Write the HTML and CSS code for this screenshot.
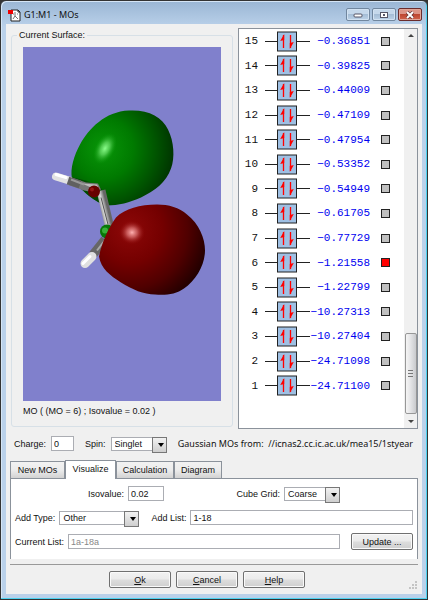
FILE: index.html
```html
<!DOCTYPE html>
<html lang="en">
<head>
    <meta charset="UTF-8">
    <meta name="viewport" content="width=device-width, initial-scale=1.0">
    <title>G1:M1 - MOs</title>
    <link rel="stylesheet" href="styles.css">
</head>
<body>
    <div class="window">
        <!-- title bar -->
        <header class="titlebar">
            <svg class="app-icon" width="13" height="13" viewBox="0 0 13 13" aria-hidden="true">
                <path d="M3 1h7l2 2v9H3z" fill="#fff" stroke="#222"/>
                <path d="M10 1v2h2" fill="none" stroke="#222"/>
                <path d="M7 3v4l-2 3M7 7l3 3M5 5h1M9 5h1" fill="none" stroke="#777"/>
                <rect x="0" y="1" width="5" height="4" fill="#e00"/>
            </svg>
            <h1 class="title">G1:M1 - MOs</h1>
            <div class="win-buttons">
                <button class="win-btn" aria-label="Minimize">
                    <svg width="10" height="8" viewBox="0 0 10 8"><rect x="1" y="3" width="8" height="3" rx="1" fill="#fff" stroke="#556"/></svg>
                </button>
                <button class="win-btn" aria-label="Maximize">
                    <svg width="10" height="8" viewBox="0 0 10 8"><rect x="1.5" y="1.5" width="7" height="5" fill="#fff" stroke="#556"/><rect x="4" y="3" width="2" height="2" fill="#556"/></svg>
                </button>
                <button class="win-btn win-close" aria-label="Close">
                    <svg width="10" height="8" viewBox="0 0 10 8"><path d="M2 1l6 6M8 1L2 7" stroke="#633" stroke-width="3.4"/><path d="M2 1l6 6M8 1L2 7" stroke="#fff" stroke-width="2"/></svg>
                </button>
            </div>
        </header>

        <main class="client">
            <div class="panels">
                <!-- surface viewer -->
                <fieldset class="surface">
                    <legend>Current Surface:</legend>
                    <div class="view">
                        <svg viewBox="23 47 198 353" role="img" aria-label="Molecular orbital 6">
                            <defs>
                                <radialGradient id="green" gradientUnits="userSpaceOnUse" cx="103" cy="148" r="76">
                                    <stop offset="0" stop-color="#089608"/>
                                    <stop offset=".4" stop-color="#007a00"/>
                                    <stop offset=".7" stop-color="#005400"/>
                                    <stop offset="1" stop-color="#002c00"/>
                                </radialGradient>
                                <radialGradient id="red" gradientUnits="userSpaceOnUse" cx="129" cy="229" r="84">
                                    <stop offset="0" stop-color="#8e0808"/>
                                    <stop offset=".4" stop-color="#740000"/>
                                    <stop offset=".7" stop-color="#500000"/>
                                    <stop offset="1" stop-color="#1c0000"/>
                                </radialGradient>
                                <radialGradient id="greenShine">
                                    <stop offset="0" stop-color="#8cff8c"/>
                                    <stop offset=".4" stop-color="#5fd65f" stop-opacity=".8"/>
                                    <stop offset="1" stop-color="#089608" stop-opacity="0"/>
                                </radialGradient>
                                <radialGradient id="redShine">
                                    <stop offset="0" stop-color="#ffb0b0"/>
                                    <stop offset=".4" stop-color="#d46a6a" stop-opacity=".8"/>
                                    <stop offset="1" stop-color="#8e0808" stop-opacity="0"/>
                                </radialGradient>
                                <linearGradient id="bond" gradientUnits="userSpaceOnUse" x1="100" y1="212" x2="108" y2="210">
                                    <stop offset="0" stop-color="#777"/>
                                    <stop offset=".5" stop-color="#ddd"/>
                                    <stop offset="1" stop-color="#666"/>
                                </linearGradient>
                            </defs>
                            <path d="M129 110C148 109 162 116 168 129C174 141 175 157 171 168C166 182 155 190 141 197C130 202 118 205 107 205C96 203 80 189 72 178C70 168 74 155 80 144C89 128 105 111 129 110Z" fill="url(#green)"/>
                            <path d="M72 177C84 179 93 182 101 188C106 193 108 199 109 205C96 203 82 191 72 177Z" fill="#003c00" opacity=".65"/>
                            <ellipse cx="105" cy="148" rx="10" ry="17" transform="rotate(28 105 148)" fill="url(#greenShine)"/>
                            <!-- upper bond -->
                            <path d="M69 176L67 184L84 190L94 192L101 189L98 183L86 182Z" fill="#777"/>
                            <path d="M82 183L97 184L99 188L91 187Z" fill="#bbb"/>
                            <path d="M56 176L69 180" stroke="#e2e2e2" stroke-width="8" stroke-linecap="round"/>
                            <path d="M56 174L66 177" stroke="#fff" stroke-width="3" stroke-linecap="round"/>
                            <path d="M68 180L80 184" stroke="#606060" stroke-width="8"/>
                            <path d="M71 179L84 184" stroke="#999" stroke-width="2"/>
                            <path d="M101 190L110 228" stroke="url(#bond)" stroke-width="9"/>
                            <path d="M101 197L108 224" stroke="#555" stroke-width="1"/>
                            <circle cx="94" cy="191" r="6" fill="#680000"/>
                            <circle cx="92" cy="189" r="2" fill="#931515"/>
                            <!-- lower bond -->
                            <path d="M105 239L93 254" stroke="#666" stroke-width="9"/>
                            <path d="M107 237L97 250" stroke="#aaa" stroke-width="2"/>
                            <circle cx="107" cy="231" r="7" fill="#087808"/>
                            <circle cx="105" cy="230" r="3" fill="#38b038"/>
                            <path d="M92 256L85 263" stroke="#e0e0e0" stroke-width="9" stroke-linecap="round"/>
                            <path d="M90 256L83 263" stroke="#fff" stroke-width="3" stroke-linecap="round"/>
                            <path d="M157 204C169 204 179 207 187 214C199 223 205 238 205 250C205 264 196 280 184 288C176 294 165 295 155 294C144 294 132 289 121 282C110 275 101 268 99 256C102 242 108 228 116 217C125 208 140 204 157 204Z" fill="url(#red)"/>
                            <ellipse cx="132" cy="232" rx="13" ry="12" fill="url(#redShine)"/>
                        </svg>
                    </div>
                    <p class="caption">MO ( (MO = 6) ; Isovalue = 0.02 )</p>
                </fieldset>

                <!-- orbital energies -->
                <section class="orbitals" aria-label="Orbitals">
                    <ol class="levels" id="levels"></ol>
                    <div class="scrollbar" aria-hidden="true">
                        <span class="arrow-up"></span>
                        <span class="track"></span>
                        <span class="thumb"></span>
                        <span class="arrow-down"></span>
                    </div>
                </section>
            </div>

            <div class="info">
                <label for="charge">Charge:</label>
                <input class="field charge" id="charge" type="text" value="0">
                <label for="spin">Spin:</label>
                <span class="select spin"><select id="spin"><option>Singlet</option></select></span>
                <span class="source">Gaussian MOs from:&nbsp; //icnas2.cc.ic.ac.uk/mea15/1styear</span>
            </div>

            <div class="tabs" role="tablist">
                <button class="tab tab-new" role="tab" aria-selected="false">New MOs</button>
                <button class="tab tab-vis active" role="tab" aria-selected="true">Visualize</button>
                <button class="tab tab-calc" role="tab" aria-selected="false">Calculation</button>
                <button class="tab tab-diag" role="tab" aria-selected="false">Diagram</button>
            </div>
            <form class="tab-body" onsubmit="return false">
                <div class="row row-iso">
                    <label for="iso">Isovalue:</label>
                    <input class="field iso" id="iso" type="text" value="0.02">
                    <label class="grid-label" for="cube">Cube Grid:</label>
                    <span class="select cube"><select id="cube"><option>Coarse</option></select></span>
                </div>
                <div class="row">
                    <label for="type">Add Type:</label>
                    <span class="select type"><select id="type"><option>Other</option></select></span>
                    <label class="list-label" for="list">Add List:</label>
                    <input class="field grow" id="list" type="text" value="1-18">
                </div>
                <div class="row">
                    <label for="current">Current List:</label>
                    <input class="field grow" id="current" type="text" value="1a-18a" disabled>
                    <button class="btn update">Update ...</button>
                </div>
            </form>

            <footer class="actions">
                <button class="btn"><u>O</u>k</button>
                <button class="btn"><u>C</u>ancel</button>
                <button class="btn"><u>H</u>elp</button>
                <svg class="grip" width="8" height="8" viewBox="0 0 8 8" aria-hidden="true">
                    <path d="M6 0h2v2H6zM3 3h2v2H3zM6 3h2v2H6zM0 6h2v2H0zM3 6h2v2H3zM6 6h2v2H6z" fill="#c4c4c4"/>
                </svg>
            </footer>
        </main>
    </div>

    <script>
        // energies from orbital 15 down to 1
        const energies = [
            '−0.36851', '−0.39825', '−0.44009', '−0.47109', '−0.47954',
            '−0.53352', '−0.54949', '−0.61705', '−0.77729', '−1.21558',
            '−1.22799', '−10.27313', '−10.27404', '−24.71098', '−24.71100'
        ];
        const selected = 6;
        const levels = document.getElementById('levels');

        energies.forEach((energy, i) => {
            const n = energies.length - i;
            const row = document.createElement('li');
            row.className = 'level';
            row.innerHTML = `
                <label class="num" for="mo${n}">${n}</label>
                <svg class="pair" width="45" height="21" viewBox="0 0 45 21">
                    <path d="M0 10.5h45" stroke="#222"/>
                    <rect x="12.5" y="1" width="19" height="19" fill="#9fc0e4" stroke="#222"/>
                    <path d="M18.5 17V4M25.5 4v13" stroke="#f00" stroke-width="1.3" fill="none"/>
                    <path d="M19.2 3v6l-4 1zM24.8 18v-6l4-1z" fill="#f00"/>
                </svg>
                <span class="energy">${energy}</span>
                <input class="mark" type="checkbox" id="mo${n}" ${n === selected ? 'checked' : ''}>`;
            levels.appendChild(row);
        });
    </script>
</body>
</html>
```

FILE: styles.css
```css
* {
    margin: 0;
    padding: 0;
    box-sizing: border-box;
}
body {
    background: #333;
    font-family: "Liberation Sans", Arial, sans-serif;
    font-size: 9px;
    line-height: 12px;
    color: #111;
}
button, input, select {
    font: inherit;
    color: inherit;
}
.window {
    display: flex;
    flex-direction: column;
    min-height: 100vh;
    padding: 0 5px 5px;
    border: 1px solid #333;
    border-radius: 6px 6px 0 0;
    background: linear-gradient(#9ab6d4, #bad1ea 26px);
    box-shadow: inset -1px -1px #4cd2f0, inset 1px 1px #d5e5f5;
}
/* title bar */
.titlebar {
    display: flex;
    align-items: center;
    gap: 3px;
    height: 23px;
    padding: 5px 0 0 2px;
}
.title {
    flex: 1;
    font-family: "Noto Sans", sans-serif;
    font-size: 9px;
    font-weight: normal;
}
.win-buttons {
    display: flex;
    align-self: flex-start;
    gap: 2px;
    margin-top: 2px;
}
.win-btn {
    display: flex;
    align-items: center;
    justify-content: center;
    width: 24px;
    height: 13px;
    border: 1px solid #71879f;
    border-radius: 2px;
    background: linear-gradient(#c5d8eb 45%, #a5bdd6 50%, #bdd3e8);
    box-shadow: inset 0 0 0 1px #d2e2f2;
}
.win-close {
    border-color: #6a2c2c;
    background: linear-gradient(#dc9486 45%, #be4630 50%, #d0644c);
    box-shadow: inset 0 0 0 1px #e1a598;
}
.client {
    flex: 1;
    display: flex;
    flex-direction: column;
    padding: 4px 4px 5px;
    background: #f0f0f0;
}
/* surface and orbital list */
.panels {
    flex: 1;
    display: flex;
    gap: 5px;
}
.surface {
    flex: 1;
    display: flex;
    flex-direction: column;
    min-width: 0;
    margin: 1px 0 2px 1px;
    padding: 6px 11px 9px;
    border: 1px solid #d7e0e7;
    border-radius: 3px;
}
.surface legend {
    margin-left: -6px;
    padding: 0 2px;
}
.view {
    flex: 1;
    display: flex;
    background: #8080cc;
}
.view svg {
    flex: 1;
    width: 100%;
}
.caption {
    margin-top: 4px;
}
.orbitals {
    display: flex;
    width: 180px;
    border: 1px solid #8b929b;
    background: #fff;
}
.levels {
    flex: 1;
    display: flex;
    flex-direction: column;
    padding-bottom: 30px;
    list-style: none;
}
.level {
    flex: 1;
    display: grid;
    grid-template-columns: 19px 45px 53px 13px;
    column-gap: 7px;
    align-items: center;
    font-family: "Liberation Mono", monospace;
    font-size: 11px;
}
.num {
    text-align: right;
}
.pair {
    display: block;
}
.energy {
    margin-left: -7px;
    text-align: right;
    color: #0000f0;
}
.mark {
    appearance: none;
    width: 9px;
    height: 9px;
    margin-left: 4px;
    border: 1px solid #222;
    background: #c0c0c0;
}
.mark:checked {
    background: #f00;
}
.scrollbar {
    display: flex;
    flex-direction: column;
    align-items: center;
    width: 13px;
    padding: 5px 0;
    background: #f0f0f0;
}
.arrow-up, .arrow-down {
    border: 3px solid transparent;
}
.arrow-up {
    border-top: 0;
    border-bottom-color: #444;
}
.arrow-down {
    margin-top: 6px;
    border-bottom: 0;
    border-top-color: #444;
}
.track {
    flex: 1;
}
.thumb {
    width: 12px;
    height: 81px;
    border: 1px solid #979797;
    border-radius: 2px;
    background:
        repeating-linear-gradient(#777 0 1px, transparent 1px 3px) center / 5px 7px no-repeat,
        linear-gradient(to right, #f5f5f5, #e4e4e6 45%, #c9cacd);
}
/* fields */
.field {
    min-width: 0;
    height: 15px;
    padding: 0 2px;
    border: 1px solid #abadb3;
    background: #fff;
}
.field:disabled {
    color: #888;
}
.select {
    position: relative;
    display: inline-flex;
    height: 14px;
}
.select select {
    appearance: none;
    width: 100%;
    height: 14px;
    padding: 0 15px 0 3px;
    border: 1px solid #abadb3;
    border-radius: 0;
    background: #fff;
}
/* drop-down button over the right end of the select */
.select::before {
    content: "";
    position: absolute;
    top: 0;
    right: 0;
    width: 13px;
    height: 14px;
    border: 1px solid #777;
    background: linear-gradient(#f2f2f2, #cfcfcf);
    pointer-events: none;
}
.select::after {
    content: "";
    position: absolute;
    top: 6px;
    right: 3px;
    border: 3px solid transparent;
    border-top: 4px solid #000;
    border-bottom: 0;
    pointer-events: none;
}
.info {
    display: flex;
    align-items: center;
    gap: 5px;
    padding: 7px 4px 9px;
    white-space: nowrap;
}
.charge {
    width: 23px;
    margin-right: 6px;
}
.spin {
    width: 56px;
}
.source {
    flex: 1;
    padding-right: 1px;
    text-align: right;
    font-family: "Noto Sans", sans-serif;
}
/* tabs */
.tabs {
    display: flex;
    align-items: flex-end;
    height: 18px;
}
.tab {
    height: 17px;
    border: 1px solid #8b929b;
    border-bottom: 0;
    background: linear-gradient(#f2f2f2, #ececec 50%, #d2d2d2);
}
.tab-new {
    width: 55px;
}
.tab-vis {
    width: 51px;
}
.tab-calc {
    width: 58px;
}
.tab-diag {
    width: 48px;
}
.tab.active {
    z-index: 1;
    height: 19px;
    margin-bottom: -1px;
    padding-bottom: 3px;
    background: #fff;
}
.tab-body {
    display: flex;
    flex-direction: column;
    gap: 9px;
    padding: 7px 4px 10px;
    border: 1px solid #8b929b;
    border-bottom: 0;
    background: #fff;
}
.row {
    display: flex;
    align-items: center;
    gap: 4px;
    height: 15px;
    white-space: nowrap;
}
.row-iso {
    padding: 0 73px;
}
.iso {
    width: 36px;
}
.grid-label {
    margin-left: auto;
}
.cube {
    width: 56px;
}
.type {
    width: 80px;
}
.list-label {
    margin-left: 8px;
}
.grow {
    flex: 1;
}
.btn {
    width: 62px;
    height: 17px;
    border: 1px solid #707070;
    border-radius: 2px;
    background: linear-gradient(#f2f2f2, #ebebeb 48%, #dddddd 52%, #cfcfcf);
    box-shadow: inset 0 0 0 1px #fafafa;
}
.update {
    margin-left: 7px;
}
.actions {
    position: relative;
    display: flex;
    justify-content: center;
    gap: 5px;
    margin-top: 5px;
    padding: 6px 14px 1px 0;
    border-top: 1px solid #999;
}
.grip {
    position: absolute;
    right: 1px;
    bottom: 0;
}
```
